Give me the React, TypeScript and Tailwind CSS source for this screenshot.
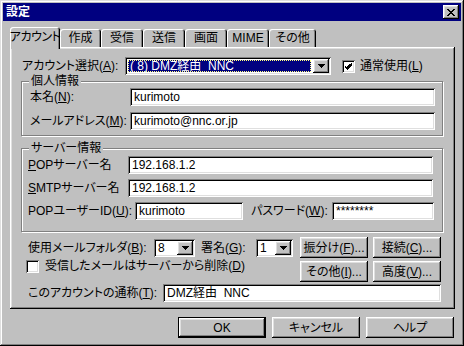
import React from "react";

const raised =
  "shadow-[inset_-1px_-1px_#000,inset_1px_1px_#fff,inset_-2px_-2px_#808080,inset_2px_2px_#dfdfdf]";
const sunken =
  "shadow-[inset_1px_1px_#808080,inset_-1px_-1px_#fff,inset_2px_2px_#000,inset_-2px_-2px_#dfdfdf]";
const etched = "border border-[#808080] shadow-[inset_1px_1px_#fff,1px_1px_#fff]";

function Arrow() {
  return (
    <svg width="7" height="4" viewBox="0 0 7 4" shapeRendering="crispEdges">
      <path d="M0 0h7v1h-1v1h-1v1h-1v1h-1v-1h-1v-1h-1v-1h-1z" fill="#000" />
    </svg>
  );
}

function DropBtn() {
  return (
    <div className={`w-[16px] h-[14px] shrink-0 bg-[#c0c0c0] flex items-center justify-center ${raised}`}>
      <Arrow />
    </div>
  );
}

function CheckMark() {
  return (
    <svg width="7" height="7" viewBox="0 0 7 7" shapeRendering="crispEdges">
      <path
        d="M6 0h1v3h-1v1h-1v1h-1v1h-1v1h-1v-1h-1v-1h-1v-1h-1v-2h1v1h1v1h1v-1h1v-1h1v-1h1z"
        fill="#000"
      />
    </svg>
  );
}

function Check({ checked }: { checked?: boolean }) {
  return (
    <div className={`w-[13px] h-[13px] shrink-0 bg-white flex items-center justify-center ${sunken}`}>
      {checked && <CheckMark />}
    </div>
  );
}

function Field({ className, children }: { className: string; children?: React.ReactNode }) {
  return (
    <div className={`h-[18px] bg-white pl-[4px] flex items-center shrink-0 whitespace-pre ${sunken} ${className}`}>
      {children}
    </div>
  );
}

function Btn({ className, children }: { className: string; children: React.ReactNode }) {
  return (
    <div className={`h-[21px] bg-[#c0c0c0] flex items-center justify-center whitespace-nowrap ${raised} ${className}`}>
      {children}
    </div>
  );
}

function Tab({ className, children, active }: { className: string; children: React.ReactNode; active?: boolean }) {
  return (
    <div
      className={`flex items-center justify-center whitespace-nowrap bg-[#c0c0c0] rounded-t-[3px] shadow-[inset_1px_1px_#fff,inset_-1px_0_#000,inset_-2px_0_#808080] ${
        active ? "h-[22px] -mb-[2px] relative z-10 pb-[2px] tracking-[-0.5px]" : "h-[18px]"
      } ${className}`}
    >
      {children}
    </div>
  );
}

export default function App() {
  return (
    <div
      className={`w-[464px] h-[346px] bg-[#c0c0c0] p-[3px] flex flex-col text-[12px] leading-[14px] text-black font-['Liberation_Sans','Noto_Sans_CJK_JP',sans-serif] [font-feature-settings:'palt'] shadow-[inset_-1px_-1px_#000,inset_1px_1px_#dfdfdf,inset_-2px_-2px_#808080,inset_2px_2px_#fff] overflow-hidden`}
    >
      {/* Title bar */}
      <div className="h-[18px] bg-[#000080] flex items-center pl-[3px] pr-[2px] shrink-0">
        <span className="text-white font-bold text-[12px]">設定</span>
        <div className={`ml-auto w-[16px] h-[14px] bg-[#c0c0c0] flex items-center justify-center ${raised}`}>
          <svg width="8" height="7" viewBox="0 0 8 7" shapeRendering="crispEdges">
            <path
              d="M0 0h2v1h1v1h2v-1h1v-1h2v1h-1v1h-1v1h-1v1h1v1h1v1h1v1h-2v-1h-1v-1h-2v1h-1v1h-2v-1h1v-1h1v-1h1v-1h-1v-1h-1v-1h-1z"
              fill="#000"
            />
          </svg>
        </div>
      </div>

      <div className="flex flex-col pl-[7px] pr-[6px] pt-[6px]">
        {/* Tabs */}
        <div className="h-[20px] flex items-end">
          <Tab active className="w-[50px]">アカウント</Tab>
          <Tab className="w-[41px]">作成</Tab>
          <Tab className="w-[42px]">受信</Tab>
          <Tab className="w-[42px]">送信</Tab>
          <Tab className="w-[42px]">画面</Tab>
          <Tab className="w-[42px]">MIME</Tab>
          <Tab className="w-[47px]">その他</Tab>
        </div>

        {/* Panel */}
        <div className={`h-[262px] bg-[#c0c0c0] pl-[11px] pt-[10px] flex flex-col ${raised}`}>
          {/* Account row */}
          <div className="h-[18px] flex items-center">
            <span className="w-[103px] ml-[1px] whitespace-nowrap">
              アカウント選択(<u>A</u>):
            </span>
            <div className={`w-[206px] h-[18px] bg-white p-[2px] flex ${sunken}`}>
              <div className="flex-1 m-[1px] mr-[2px] bg-[#000080] border border-dotted border-[#ffff80] text-white flex items-center pl-[1px] whitespace-pre">
                ( 8) DMZ経由  NNC
              </div>
              <DropBtn />
            </div>
            <div className="ml-[11px]">
              <Check checked />
            </div>
            <span className="ml-[5px] whitespace-nowrap">
              通常使用(<u>L</u>)
            </span>
          </div>

          {/* 個人情報 */}
          <div className={`relative mt-[6px] w-[422px] h-[55px] pl-[8px] pt-[6px] flex flex-col gap-[6px] ${etched}`}>
            <span className="absolute -top-[8px] left-[7px] px-[2px] bg-[#c0c0c0]">個人情報</span>
            <div className="flex items-center">
              <span className="w-[100px] whitespace-nowrap">
                本名(<u>N</u>):
              </span>
              <Field className="w-[305px]">kurimoto</Field>
            </div>
            <div className="flex items-center">
              <span className="w-[100px] whitespace-nowrap">
                メールアドレス(<u>M</u>):
              </span>
              <Field className="w-[305px]">kurimoto@nnc.or.jp</Field>
            </div>
          </div>

          {/* サーバー情報 */}
          <div className={`relative mt-[12px] w-[422px] h-[84px] pl-[6px] pt-[7px] flex flex-col gap-[5px] ${etched}`}>
            <span className="absolute -top-[8px] left-[7px] px-[2px] bg-[#c0c0c0]">サーバー情報</span>
            <div className="flex items-center">
              <span className="w-[100px] whitespace-nowrap">
                <u>P</u>OPサーバー名
              </span>
              <Field className="w-[305px]">192.168.1.2</Field>
            </div>
            <div className="flex items-center">
              <span className="w-[100px] whitespace-nowrap">
                <u>S</u>MTPサーバー名
              </span>
              <Field className="w-[305px]">192.168.1.2</Field>
            </div>
            <div className="flex items-center">
              <span className="w-[107px] whitespace-nowrap">
                POPユーザーID(<u>U</u>):
              </span>
              <Field className="w-[108px]">kurimoto</Field>
              <span className="ml-[8px] w-[81px] whitespace-nowrap">
                パスワード(<u>W</u>):
              </span>
              <Field className="w-[102px]">********</Field>
            </div>
          </div>

          {/* Folder / signature / buttons */}
          <div className="mt-[5px] flex">
            <div className="flex flex-col">
              <div className="h-[21px] flex items-center ml-[7px]">
                <span className="w-[126px] whitespace-nowrap">
                  使用メールフォルダ(<u>B</u>):
                </span>
                <div className={`w-[41px] h-[18px] bg-white p-[2px] flex ${sunken}`}>
                  <div className="flex-1 pl-[2px] flex items-center">8</div>
                  <DropBtn />
                </div>
                <span className="ml-[6px] w-[55px] whitespace-nowrap">
                  署名(<u>G</u>):
                </span>
                <div className={`w-[37px] h-[18px] bg-white p-[2px] flex ${sunken}`}>
                  <div className="flex-1 pl-[2px] flex items-center">1</div>
                  <DropBtn />
                </div>
              </div>
              <div className="mt-[1px] h-[14px] flex items-center ml-[5px]">
                <Check />
                <span className="ml-[6px] whitespace-nowrap">
                  受信したメールはサーバーから削除(<u>D</u>)
                </span>
              </div>
            </div>
            <div className="ml-[7px] grid grid-cols-[68px_68px] gap-x-[5px] gap-y-[3px]">
              <Btn className="w-[68px]">
                振分け(<u>F</u>)...
              </Btn>
              <Btn className="w-[68px]">
                接続(<u>C</u>)...
              </Btn>
              <Btn className="w-[68px]">
                その他(<u>I</u>)...
              </Btn>
              <Btn className="w-[68px]">
                高度(<u>V</u>)...
              </Btn>
            </div>
          </div>

          {/* Nickname */}
          <div className="mt-[2px] flex items-center ml-[7px]">
            <span className="w-[135px] whitespace-nowrap">
              このアカウントの通称(<u>T</u>):
            </span>
            <Field className="w-[278px]">DMZ経由  NNC</Field>
          </div>
        </div>

        {/* Bottom buttons */}
        <div className="mt-[8px] flex justify-end gap-[6px] pr-[1px]">
          <div className="w-[88px] h-[21px] bg-[#c0c0c0] flex items-center justify-center shadow-[inset_0_0_0_1px_#000,inset_-2px_-2px_#000,inset_2px_2px_#fff,inset_-3px_-3px_#808080,inset_3px_3px_#dfdfdf]">
            OK
          </div>
          <Btn className="w-[88px]">キャンセル</Btn>
          <Btn className="w-[88px]">ヘルプ</Btn>
        </div>
      </div>
    </div>
  );
}
